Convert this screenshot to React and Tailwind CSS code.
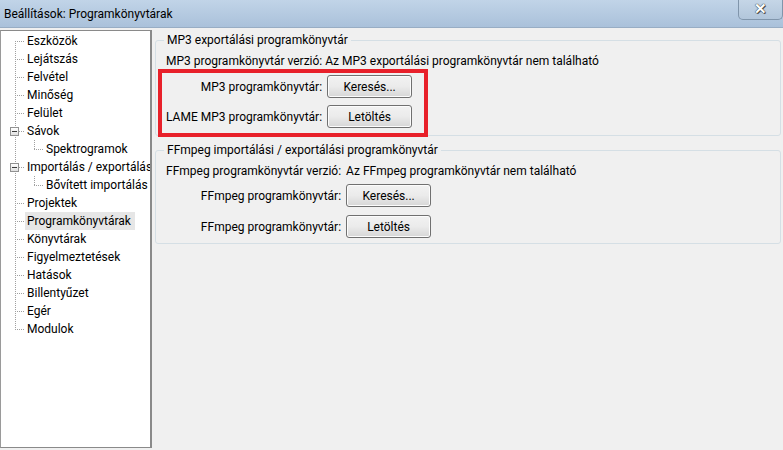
const FONT = { fontFamily: 'Roboto, "Noto Sans", sans-serif' }

const TREE = [
  { label: 'Eszközök', level: 0 },
  { label: 'Lejátszás', level: 0 },
  { label: 'Felvétel', level: 0 },
  { label: 'Minőség', level: 0 },
  { label: 'Felület', level: 0 },
  { label: 'Sávok', level: 0, open: true },
  { label: 'Spektrogramok', level: 1 },
  { label: 'Importálás / exportálás', level: 0, open: true },
  { label: 'Bővített importálás', level: 1 },
  { label: 'Projektek', level: 0 },
  { label: 'Programkönyvtárak', level: 0, selected: true },
  { label: 'Könyvtárak', level: 0 },
  { label: 'Figyelmeztetések', level: 0 },
  { label: 'Hatások', level: 0 },
  { label: 'Billentyűzet', level: 0 },
  { label: 'Egér', level: 0 },
  { label: 'Modulok', level: 0 },
]

function TreeRow({ item }) {
  return (
    <div className="relative h-[18px]">
      {item.level === 0 ? (
        <>
          <span className="absolute left-[14px] w-[9px] top-[9px] border-t border-dotted border-[#a0a0a0]" />
          {item.open && (
            <span className="absolute left-[9px] top-[5px] w-[9px] h-[9px] border border-[#919191] bg-gradient-to-b from-white to-[#e0e0e0] flex items-center justify-center">
              <span className="w-[5px] h-px bg-[#3b3b3b]" />
            </span>
          )}
        </>
      ) : (
        <>
          <span className="absolute left-[33px] top-0 h-[9px] border-l border-dotted border-[#a0a0a0]" />
          <span className="absolute left-[33px] w-[9px] top-[9px] border-t border-dotted border-[#a0a0a0]" />
        </>
      )}
      <span
        className={
          'absolute top-0 whitespace-nowrap leading-[18px] px-[2px] ' +
          (item.level === 0 ? 'left-[24px] ' : 'left-[43px] ') +
          (item.selected ? 'bg-[#e6e6e6] pr-[4px]' : '')
        }
      >
        {item.label}
      </span>
    </div>
  )
}

function Button({ children }) {
  return (
    <div className="w-[85px] h-[23px] rounded-[3px] border border-[#707070] bg-gradient-to-b from-[#f2f2f2] via-[#ebebeb] to-[#d6d6d6] flex items-center justify-center shadow-[inset_0_0_0_1px_#fcfcfc]">
      {children}
    </div>
  )
}

function Group({ title, children, className }) {
  return (
    <div className={'relative border border-[#d5dfe5] rounded-[3px] ' + className}>
      <span className="absolute left-[8px] -top-[9px] bg-[#f0f0f0] px-[3px] leading-[17px]">{title}</span>
      {children}
    </div>
  )
}

export default function App() {
  return (
    <div className="w-[783px] h-[450px] overflow-hidden bg-[#f0f0f0] text-[12px] text-black relative" style={FONT}>
      {/* title bar */}
      <div className="h-[28px] bg-gradient-to-b from-[#c1d4e8] to-[#aac1da] border-b border-[#98adc4] flex items-center pl-[4px] relative">
        <span className="leading-none">Beállítások: Programkönyvtárak</span>
        <div className="absolute right-0 top-0 w-[45px] h-[20px] rounded-b-[5px] border border-t-0 border-[#8095ab] bg-gradient-to-b from-[#c5d6e7] to-[#b2c6db] flex items-center justify-center">
          <span className="text-white font-bold text-[15px] leading-none [text-shadow:0_0_1px_#333,0_0_1px_#333,1px_1px_0_#555]">✕</span>
        </div>
      </div>

      <div className="flex pt-[2px] h-[420px]">
        {/* tree */}
        <div className="w-[152px] shrink-0 overflow-hidden bg-white border border-r-2 border-[#8a8a8a] border-l-[#9a9a9a] relative pt-[1px]">
          <span className="absolute left-[14px] top-[10px] h-[289px] border-l border-dotted border-[#a0a0a0]" />
          {TREE.map(item => (
            <TreeRow key={item.label} item={item} />
          ))}
        </div>

        {/* panel */}
        <div className="flex-1 pl-[3px] pr-[2px] pt-[10px] relative">
          <Group title="MP3 exportálási programkönyvtár" className="h-[96px] pt-[12px] pl-[10px]">
            <div className="leading-[17px]">MP3 programkönyvtár verzió: Az MP3 exportálási programkönyvtár nem található</div>
            <div className="grid grid-cols-[auto_auto] justify-start items-center gap-x-[5px] gap-y-[7px] mt-[5px]">
              <span className="text-right">MP3 programkönyvtár:</span>
              <Button>Keresés...</Button>
              <span className="text-right">LAME MP3 programkönyvtár:</span>
              <Button>Letöltés</Button>
            </div>
          </Group>

          <Group title="FFmpeg importálási / exportálási programkönyvtár" className="h-[94px] mt-[14px] pt-[12px] pl-[10px]">
            <div className="grid grid-cols-[auto_auto] justify-start items-center gap-x-[5px] gap-y-[8px]">
              <span className="text-right leading-[17px] -mb-[4px]">FFmpeg programkönyvtár verzió:</span>
              <span className="leading-[17px] -mb-[4px]">Az FFmpeg programkönyvtár nem található</span>
              <span className="text-right">FFmpeg programkönyvtár:</span>
              <Button>Keresés...</Button>
              <span className="text-right">FFmpeg programkönyvtár:</span>
              <Button>Letöltés</Button>
            </div>
          </Group>

          {/* red annotation box */}
          <div className="absolute left-[6px] top-[39px] w-[270px] h-[68px] border-[4px] border-[#e8202a]" />
        </div>
      </div>
    </div>
  )
}
